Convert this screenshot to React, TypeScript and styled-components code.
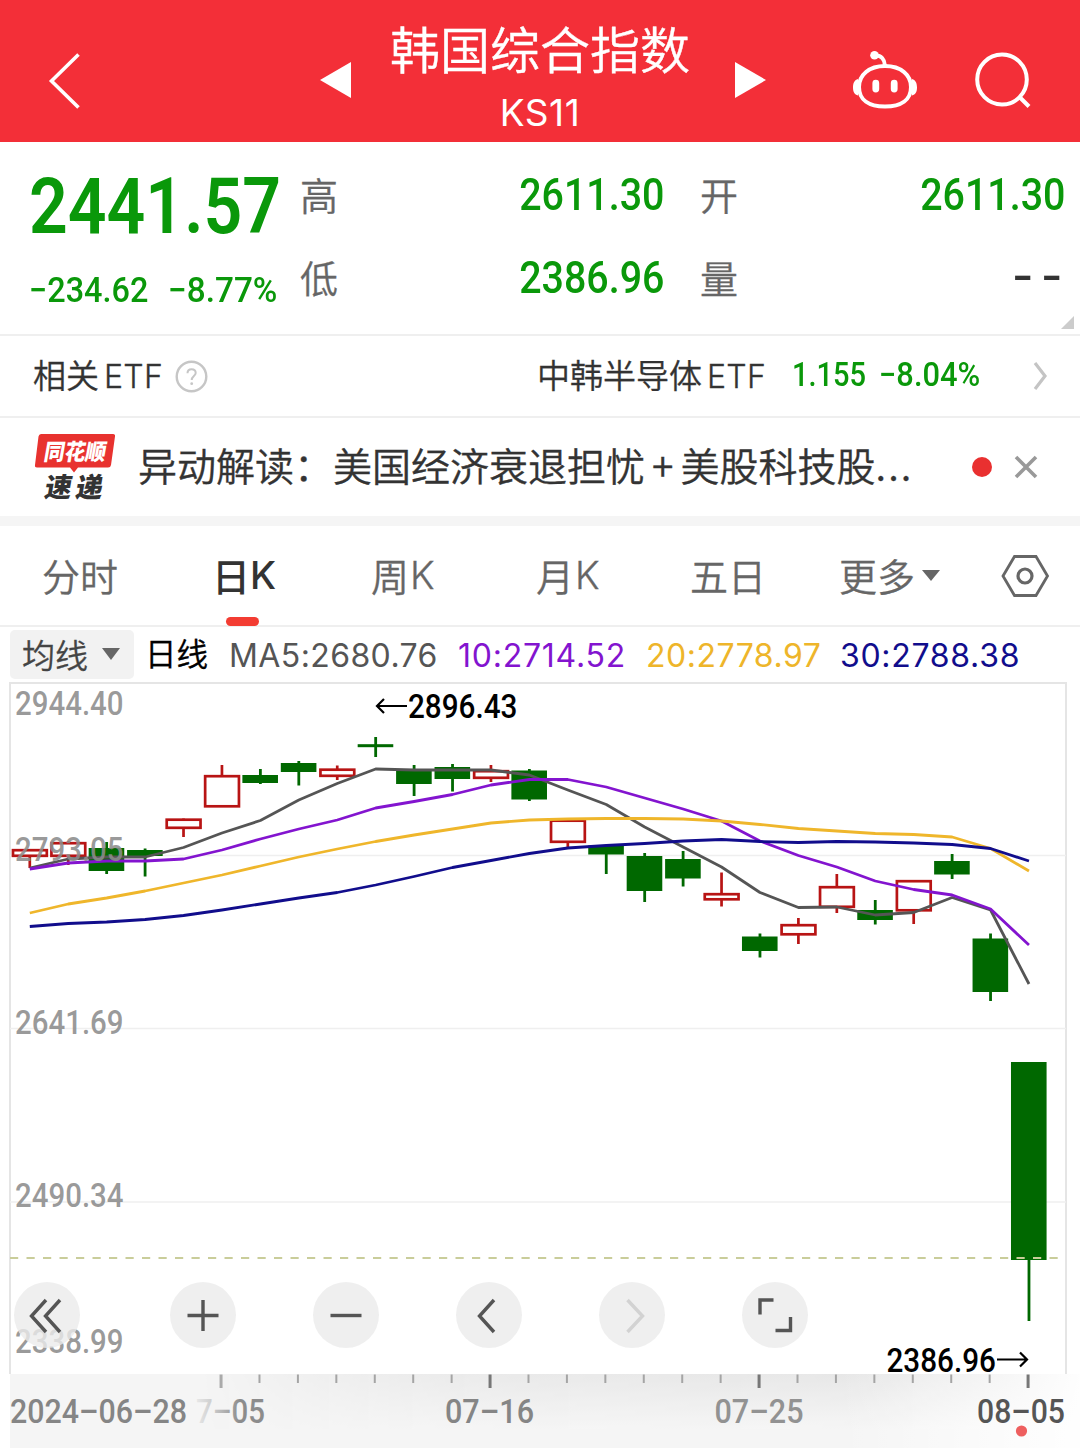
import React from 'react';
import styled, { createGlobalStyle } from 'styled-components';

const GlobalStyle = createGlobalStyle`
  * { box-sizing: border-box; }
  body { margin: 0; background: #fff; }
`;

const CJK = '"Noto Sans CJK SC", "Noto Sans", sans-serif';
const DIGITS = 'Roboto, "Noto Sans CJK SC", sans-serif';
const GREEN = '#0a980a';

const Screen = styled.div`
  width: 1080px;
  height: 1448px;
  overflow: hidden;
  background: #fff;
  color: #333;
  font-family: ${CJK};
  display: flex;
  flex-direction: column;
`;

/* ---------- header ---------- */

const Header = styled.header`
  height: 142px;
  flex: none;
  background: #f32f38;
  color: #fff;
  display: grid;
  grid-template-columns: 320px 32px 376px 38px 314px;
  align-items: center;
  svg { display: block; }
`;

const BackCell = styled.div`
  padding: 19px 0 0 48px;
`;

const ArrowCell = styled.div<{ $right?: boolean }>`
  padding-top: 18px;
  padding-left: ${(p) => (p.$right ? '7px' : '0')};
`;

const TitleCell = styled.div`
  align-self: start;
  display: flex;
  flex-direction: column;
  align-items: center;
`;

const Title = styled.h1`
  margin: 15px 0 0;
  font-size: 50px;
  line-height: 64px;
  font-weight: 350;
  -webkit-text-stroke: 0.4px currentColor;
  white-space: nowrap;
`;

const Code = styled.div`
  margin-top: 9px;
  font-family: Inter, sans-serif;
  font-size: 37px;
  line-height: 50px;
  font-weight: 400;
  letter-spacing: 0.6px;
`;

const HeaderIcons = styled.div`
  display: flex;
  gap: 54px;
  padding: 20px 0 0 84px;
`;

/* ---------- numbers ---------- */

const Num = styled.span<{ $size: number; $sx?: number; $right?: boolean; $weight?: number }>`
  display: inline-block;
  font-family: ${DIGITS};
  font-size: ${(p) => p.$size}px;
  font-weight: ${(p) => p.$weight ?? 500};
  color: ${GREEN};
  white-space: pre;
  transform: scaleX(${(p) => p.$sx ?? 1});
  transform-origin: ${(p) => (p.$right ? 'right' : 'left')} center;
`;

const Quote = styled.section`
  height: 194px;
  flex: none;
  display: grid;
  grid-template-columns: 271px 364px 364px;
  column-gap: 0;
  padding-left: 29px;
  border-bottom: 2px solid #efefef;
  position: relative;
`;

const PriceCol = styled.div`
  padding-top: 35px;
`;

const Price = styled.div`
  height: 60px;
  line-height: 60px;
`;

const Changes = styled.div`
  margin-top: 34px;
  height: 40px;
  line-height: 40px;
  display: grid;
  grid-template-columns: 139px 120px;
`;

const StatCol = styled.div<{ $shift?: boolean }>`
  padding-top: 27px;
  margin-left: ${(p) => (p.$shift ? '36px' : '0')};
  margin-right: ${(p) => (p.$shift ? '-37px' : '0')};
  display: flex;
  flex-direction: column;
  gap: 33px;
`;

const Stat = styled.div`
  display: flex;
  justify-content: space-between;
  height: 50px;
  line-height: 50px;
  ${Num} { line-height: 54px; }
`;

const StatLabel = styled.span`
  font-size: 38px;
  font-weight: 350;
  -webkit-text-stroke: 0.3px currentColor;
  color: #666;
`;

const Dashes = styled.span`
  display: inline-block;
  font-family: Roboto, sans-serif;
  font-weight: 700;
  font-size: 38px;
  letter-spacing: 5px;
  color: #333;
  margin-right: -5px;
  transform: scaleX(1.45);
  transform-origin: right center;
`;

const Corner = styled.i`
  position: absolute;
  right: 6px;
  bottom: 5px;
  border-left: 13px solid transparent;
  border-bottom: 13px solid #ccc;
`;

/* ---------- ETF row ---------- */

const EtfRow = styled.section`
  height: 82px;
  flex: none;
  display: flex;
  align-items: center;
  padding-left: 33px;
  border-bottom: 2px solid #efefef;
  font-size: 33px;
  line-height: 50px;
  font-weight: 350;
  white-space: nowrap;
  svg { display: block; }
`;

const EtfLabel = styled.span<{ $w: number }>`
  width: ${(p) => p.$w}px;
  margin-top: -2px;
  -webkit-text-stroke: 0.3px currentColor;
  span { margin-left: 5px; font-family: Inter, sans-serif; font-size: 32px; letter-spacing: 0.3px; }
`;

const EtfQuote = styled.div`
  margin-left: 329px;
  display: grid;
  grid-template-columns: 255px 87px 154px 20px;
  align-items: center;
  ${Num} { margin-top: -2px; }
`;

/* ---------- news row ---------- */

const NewsRow = styled.section`
  height: 98px;
  flex: none;
  display: grid;
  grid-template-columns: 105px 834px 42px 40px;
  align-items: center;
  padding-left: 33px;
  svg { display: block; overflow: visible; }
`;

const NewsText = styled.span`
  font-size: 39px;
  line-height: 56px;
  font-weight: 350;
  -webkit-text-stroke: 0.35px currentColor;
  white-space: nowrap;
  margin-top: -6px;
`;

const Plus = styled.span`
  margin: 0 7px;
`;

const Dots = styled.span`
  letter-spacing: 2.2px;
`;

const NewsDot = styled.i`
  width: 20px;
  height: 20px;
  border-radius: 50%;
  background: #e93030;
`;

const Band = styled.div`
  height: 10px;
  flex: none;
  background: #f5f5f5;
`;

/* ---------- tabs ---------- */

const Tabs = styled.nav`
  height: 101px;
  flex: none;
  display: grid;
  grid-template-columns: 172px 157px 165px 154px 149px 162px 60px;
  padding-left: 42px;
  border-bottom: 2px solid #efefef;
  svg { display: block; }
`;

const Tab = styled.div<{ $active?: boolean }>`
  display: flex;
  flex-direction: column;
  align-items: flex-start;
  padding-top: 21px;
  font-size: 38px;
  line-height: 56px;
  font-weight: ${(p) => (p.$active ? 500 : 350)};
  -webkit-text-stroke: ${(p) => (p.$active ? 0 : 0.3)}px currentColor;
  color: ${(p) => (p.$active ? '#333' : '#666')};
  b {
    font-family: Inter, sans-serif;
    font-weight: ${(p) => (p.$active ? 500 : 350)};
    font-size: 38px;
  }
`;

const TabText = styled.span<{ $pull?: boolean }>`
  display: flex;
  align-items: center;
  gap: ${(p) => (p.$pull ? 0 : 1)}px;
  margin-left: ${(p) => (p.$pull ? -2 : 0)}px;
  height: 56px;
  white-space: nowrap;
`;

const Underline = styled.i`
  width: 33px;
  height: 9px;
  border-radius: 5px;
  background: #f33c32;
  margin: 14px 0 0 12px;
`;

const Caret = styled.i<{ $h: number; $ml: number }>`
  border: 9px solid transparent;
  border-top: ${(p) => p.$h}px solid #666;
  border-bottom: 0;
  margin-left: ${(p) => p.$ml}px;
`;

const SettingsCell = styled.div`
  padding-top: 29px;
`;

/* ---------- legend ---------- */

const Legend = styled.div`
  height: 55px;
  flex: none;
  display: grid;
  grid-template-columns: 124px 84px 229px 188px 194px 200px;
  column-gap: 0;
  padding: 3px 0 0 10px;
  white-space: nowrap;
`;

const MaButton = styled.button`
  width: 124px;
  height: 49px;
  padding: 0 0 2px 12px;
  border: 0;
  border-radius: 5px;
  background: #f2f2f2;
  color: #444;
  font-family: ${CJK};
  font-size: 33px;
  font-weight: 350;
  -webkit-text-stroke: 0.3px currentColor;
  line-height: 46px;
  display: flex;
  align-items: center;
`;

const Period = styled.span`
  padding-left: 11px;
  font-size: 31.5px;
  line-height: 45px;
  font-weight: 350;
  -webkit-text-stroke: 0.4px currentColor;
  color: #000;
`;

const Ma = styled.span<{ $color: string; $ls: number }>`
  padding-left: 11px;
  font-family: Inter, sans-serif;
  font-size: 32px;
  line-height: 51px;
  color: ${(p) => p.$color};
  letter-spacing: ${(p) => p.$ls}px;
`;

/* ---------- chart ---------- */

const ChartArea = styled.section`
  position: relative;
  height: 766px;
  flex: none;
  svg { display: block; }
`;

const Controls = styled.div`
  position: absolute;
  left: 14px;
  top: 600px;
  display: flex;
  gap: 77px;
`;

const RoundButton = styled.button<{ $first?: boolean }>`
  width: 66px;
  height: 66px;
  padding: 0;
  border: 0;
  border-radius: 50%;
  background: rgba(235, 235, 235, 0.8);
  margin-right: ${(p) => (p.$first ? '13px' : '0')};
`;

type Candle = { up?: boolean; top: number; bottom: number; high: number; low: number };

const c = (top: number, bottom: number, high: number, low: number, up = false): Candle => ({ top, bottom, high, low, up });

const candles: Candle[] = [
  c(849, 857, 849, 868, true),
  c(842, 857, 841, 865, true),
  c(848, 871, 842, 874),
  c(850, 856, 848.5, 876.5),
  c(818.5, 829, 818.5, 837, true),
  c(775, 807.5, 765, 807, true),
  c(775, 783, 769, 784),
  c(763, 772, 761, 785.5),
  c(768.5, 777, 765.5, 780, true),
  c(744.2, 747.2, 737, 757),
  c(769, 784, 765, 796),
  c(767, 779, 764, 791.5),
  c(770, 779, 765, 782, true),
  c(770.5, 799.5, 769, 801),
  c(819.5, 843, 820, 848, true),
  c(845.5, 854.5, 845.5, 874),
  c(856, 891, 853, 902),
  c(859, 878.5, 851, 886.5),
  c(893, 900.5, 872.5, 906.5, true),
  c(936.5, 951, 933.5, 957.5),
  c(924, 935.5, 918, 944, true),
  c(886, 908, 874, 913, true),
  c(910, 920, 900, 924.5),
  c(880, 911.5, 880, 924, true),
  c(861, 874.5, 854, 879),
  c(938.5, 992, 933.5, 1001),
  c(1062, 1260, 1062, 1321),
];

const averages = [
  { color: '#555', ys: [868, 859, 857, 857, 847.5, 833, 820.5, 800, 783.5, 769, 770, 770, 770, 775, 790, 804.5, 827, 847, 867, 892.5, 907.5, 907, 915, 912.5, 897.5, 910, 984] },
  { color: '#8314cf', ys: [869, 863, 861, 861, 859, 850, 839, 829, 820, 808, 801.5, 794.5, 785, 779.5, 779.5, 787, 798, 809, 821, 841, 855.5, 867, 881, 889.5, 895, 909, 945] },
  { color: '#efb62b', ys: [913, 904, 898, 891, 883, 875, 866, 857, 849, 841.5, 835, 829, 823, 820, 819, 818.5, 818.5, 819, 821, 824.5, 828.5, 831, 833.5, 834.5, 837, 848.5, 871] },
  { color: '#110d8c', ys: [926.5, 923.5, 922, 919.5, 915.5, 910, 904, 898, 892.5, 885, 876.5, 867.5, 860.5, 853.5, 848, 845.5, 843.5, 841, 839.5, 841.5, 842.5, 841.5, 842, 843, 844.5, 848.5, 861] },
];

const cx = (i: number) => 29.8 + i * 38.43;

const priceLabels: [string, number][] = [
  ['2944.40', 714.5],
  ['2793.05', 860.5],
  ['2641.69', 1034],
  ['2490.34', 1207],
  ['2338.99', 1353],
];

const dateLabels = [
  { text: '2024–06–28', x: 10, w: 177, fill: '#858585' },
  { text: '7–05', x: 196, w: 69, fill: 'url(#dateFade)' },
  { text: '07–16', x: 445, w: 89, fill: '#858585' },
  { text: '07–25', x: 714.5, w: 89, fill: '#929292' },
  { text: '08–05', x: 977, w: 88, fill: '#555' },
];

const Chart = () => (
  <svg width="1080" height="766" viewBox="0 682 1080 766" fontFamily={DIGITS} fontWeight={500} fontSize={32.5}>
    <defs>
      <linearGradient id="dateFade" gradientUnits="userSpaceOnUse" x1="196" y1="0" x2="240" y2="0">
        <stop offset="0" stopColor="#e8e8e8" />
        <stop offset="0.35" stopColor="#cfcfcf" />
        <stop offset="1" stopColor="#8c8c8c" />
      </linearGradient>
      <linearGradient id="axisDown" x1="0" y1="0" x2="0" y2="1">
        <stop offset="0" stopColor="#e5e5e5" />
        <stop offset="1" stopColor="#f5f5f5" />
      </linearGradient>
      <linearGradient id="axisMask" x1="0" y1="0" x2="1" y2="0">
        <stop offset="0" stopColor="#000" />
        <stop offset="0.35" stopColor="#fff" stopOpacity="0.7" />
        <stop offset="1" stopColor="#fff" />
      </linearGradient>
      <linearGradient id="axisRight" x1="0" y1="0" x2="1" y2="0">
        <stop offset="0" stopColor="#fff" stopOpacity="0" />
        <stop offset="1" stopColor="#fff" stopOpacity="0.95" />
      </linearGradient>
      <mask id="shadeMask"><rect x="200" y="1374" width="880" height="74" fill="url(#axisMask)" /></mask>
    </defs>

    <rect x="10" y="1374" width="1070" height="74" fill="#f5f5f5" />
    <rect x="200" y="1374" width="880" height="55" fill="url(#axisDown)" mask="url(#shadeMask)" />
    <rect x="840" y="1374" width="240" height="74" fill="url(#axisRight)" />

    <path d="M10 1374V683H1066V1374" fill="none" stroke="#e5e5e5" strokeWidth="2" />
    {[855.5, 1028.5, 1202].map((y) => (
      <path key={y} d={`M10 ${y}H1066`} stroke="#efefef" strokeWidth="1.6" />
    ))}

    {candles.map((k, i) =>
      k.up ? (
        <g key={i} stroke="#b81414" strokeWidth="2.7" fill="none">
          <path d={`M${cx(i)} ${k.high}V${k.top + 1}M${cx(i)} ${k.bottom - 1}V${k.low}`} />
          <rect x={cx(i) - 16.8} y={k.top + 1.2} width="33.8" height={k.bottom - k.top - 2.4} />
        </g>
      ) : (
        <g key={i} fill="#006800">
          <rect x={cx(i) - 1.4} y={k.high} width="2.8" height={k.low - k.high} />
          <rect x={cx(i) - 18} y={k.top} width="35.6" height={k.bottom - k.top} />
        </g>
      ),
    )}

    {averages.map((a) => (
      <polyline
        key={a.color}
        points={a.ys.map((y, i) => `${cx(i)},${y}`).join(' ')}
        fill="none"
        stroke={a.color}
        strokeWidth="2.8"
        strokeLinejoin="round"
      />
    ))}

    <path d="M10 1258H1066" stroke="#c9cd9a" strokeWidth="1.8" strokeDasharray="8.2 8.3" />

    {priceLabels.map(([t, y]) => (
      <text key={t} x="15" y={y} fill="#8c8c8c" fillOpacity="0.88" textLength="108.5" lengthAdjust="spacingAndGlyphs">
        {t}
      </text>
    ))}

    <g fill="#000">
      <text x="408" y="717.5" textLength="109.5" lengthAdjust="spacingAndGlyphs">2896.43</text>
      <text x="886.5" y="1371.5" textLength="109.5" lengthAdjust="spacingAndGlyphs">2386.96</text>
    </g>
    <path
      d="M407 706H377.500M384 699L377 706L384 713M997 1359.500H1026.500M1020 1352.500L1027 1359.500L1020 1366.500"
      fill="none"
      stroke="#000"
      strokeWidth="2.200"
    />

    {Array.from({ length: 22 }, (_, n) => n + 5).map((i) => {
      const major = i === 5 || i === 12 || i === 19 || i === 26;
      const x = cx(i) - 0.9;
      return <path key={i} d={`M${x} 1374.500V${major ? 1388 : 1383}`} stroke={i === 5 ? '#aaa' : major ? '#777' : '#a5a5a5'} strokeWidth={major ? 3 : 2} />;
    })}

    {dateLabels.map((d) => (
      <text key={d.text} x={d.x} y="1423" fill={d.fill} textLength={d.w} lengthAdjust="spacingAndGlyphs">
        {d.text}
      </text>
    ))}
    <circle cx="1021.5" cy="1431" r="5.6" fill="#ee5f5f" />
  </svg>
);

const icons: { d: string; color?: string }[] = [
  { d: 'M32 18L17.5 34L32 50M46 18L31.5 34L46 50' },
  { d: 'M33 18V49M17.5 33.5H48.5' },
  { d: 'M17.5 33.5H48.5' },
  { d: 'M38 18L23.5 34L38 50' },
  { d: 'M28.5 18L43.5 34L28.5 50', color: '#d2d2d2' },
  { d: 'M31.5 18H18V32.5M33.5 48.5H48.5V35' },
];

export default function App() {
  return (
    <Screen>
      <GlobalStyle />
      <Header>
        <BackCell>
          <svg width="34" height="58" viewBox="0 0 34 58" fill="none" stroke="#fff" strokeWidth="3.6">
            <path d="M30.5 2.5L3.5 29L30.5 55.500" />
          </svg>
        </BackCell>
        <ArrowCell>
          <svg width="32" height="36" viewBox="0 0 32 36"><path d="M0 18L31 0V36Z" fill="#fff" /></svg>
        </ArrowCell>
        <TitleCell>
          <Title>韩国综合指数</Title>
          <Code>KS11</Code>
        </TitleCell>
        <ArrowCell $right>
          <svg width="31" height="36" viewBox="0 0 31 36"><path d="M0 0L31 18L0 36Z" fill="#fff" /></svg>
        </ArrowCell>
        <HeaderIcons>
          <svg width="70" height="62" viewBox="850 50 70 62" fill="none" stroke="#fff" strokeWidth="4">
            <circle cx="874.5" cy="55.300" r="4.300" fill="#fff" stroke="none" />
            <path d="M876 55.500C881 55.500 884.500 59 884.800 65" />
            <path d="M885 66C901 66 911 75 911 87C911 100 901 106.500 885 106.500C869 106.500 859 100 859 87C859 75 869 66 885 66Z" />
            <path d="M858 79C854.500 80 853 83 853 87.500C853 92 854.500 94.500 858 95.500ZM912 79C915.500 80 917 83 917 87.500C917 92 915.500 94.500 912 95.500Z" fill="#fff" stroke="none" />
            <path d="M875.800 83.200V89M894.200 83.200V89" strokeWidth="6.800" strokeLinecap="round" />
          </svg>
          <svg width="60" height="62" viewBox="974 50 60 62" fill="none" stroke="#fff" strokeWidth="4">
            <ellipse cx="1002" cy="79.500" rx="24.800" ry="25" />
            <path d="M1019 96.500L1029 106.500" />
          </svg>
        </HeaderIcons>
      </Header>

      <Quote>
        <PriceCol>
          <Price><Num $size={77.5} $sx={0.876} $weight={600}>2441.57</Num></Price>
          <Changes>
            <Num $size={35} $sx={0.926}>−234.62</Num>
            <Num $size={35} $sx={0.952}>−8.77%</Num>
          </Changes>
        </PriceCol>
        <StatCol>
          <Stat><StatLabel>高</StatLabel><Num $size={43.5} $sx={0.905} $right>2611.30</Num></Stat>
          <Stat><StatLabel>低</StatLabel><Num $size={43.5} $sx={0.905} $right>2386.96</Num></Stat>
        </StatCol>
        <StatCol $shift>
          <Stat><StatLabel>开</StatLabel><Num $size={43.5} $sx={0.905} $right>2611.30</Num></Stat>
          <Stat><StatLabel>量</StatLabel><Dashes>--</Dashes></Stat>
        </StatCol>
        <Corner />
      </Quote>

      <EtfRow>
        <EtfLabel $w={142}>相关<span>ETF</span></EtfLabel>
        <svg width="33" height="33" viewBox="0 0 33 33" fill="none" stroke="#c6c6c6">
          <circle cx="16.500" cy="16.500" r="14.800" strokeWidth="2.400" />
          <path d="M12.500 13.300C12.500 10.800 14.200 9.300 16.600 9.300C19 9.300 20.700 10.800 20.700 13C20.700 16 16.700 16.200 16.700 20" strokeWidth="2" />
          <circle cx="16.700" cy="23.700" r="1.400" fill="#c6c6c6" stroke="none" />
        </svg>
        <EtfQuote>
          <EtfLabel $w={240}>中韩半导体<span>ETF</span></EtfLabel>
          <Num $size={33} $sx={0.88}>1.155</Num>
          <Num $size={33} $sx={0.935}>−8.04%</Num>
          <svg width="16" height="30" viewBox="0 0 16 30" fill="none" stroke="#c4c4c4" strokeWidth="3.200">
            <path d="M2 2L12 15L2 28" />
          </svg>
        </EtfQuote>
      </EtfRow>

      <NewsRow>
        <svg width="84" height="70" viewBox="32 432 84 70" fontFamily={CJK} fontWeight={900}>
          <path d="M40 434H112Q114.500 434 114 436.500L110 465Q109.600 467.500 107 467.500H77L73 472.500L69 467.500H36Q33.600 467.500 34 465L37.500 436.500Q38 434 40 434Z" fill="#e8322f" />
          <text transform="translate(42 459.500) skewX(-10)" fontSize="22.500" fill="#fff" textLength="62" lengthAdjust="spacingAndGlyphs">同花顺</text>
          <text transform="translate(42.500 497) skewX(-10)" x="0 31" fontSize="27" fill="#333">速递</text>
        </svg>
        <NewsText>异动解读：美国经济衰退担忧<Plus>+</Plus>美股科技股<Dots>...</Dots></NewsText>
        <NewsDot />
        <svg width="24" height="24" viewBox="0 0 24 24" stroke="#999" strokeWidth="3.600">
          <path d="M2 2L22 22M22 2L2 22" />
        </svg>
      </NewsRow>
      <Band />

      <Tabs>
        <Tab><TabText>分时</TabText></Tab>
        <Tab $active>
          <TabText $pull>日<b>K</b></TabText>
          <Underline />
        </Tab>
        <Tab><TabText>周<b>K</b></TabText></Tab>
        <Tab><TabText>月<b>K</b></TabText></Tab>
        <Tab><TabText>五日</TabText></Tab>
        <Tab><TabText>更多<Caret $h={11} $ml={6} /></TabText></Tab>
        <SettingsCell>
          <svg width="48" height="42" viewBox="0 0 48 42" fill="none" stroke="#666" strokeWidth="2.800">
            <path d="M2 21L13.500 1.500H35L46.500 21L35 40.500H13.500Z" />
            <circle cx="24" cy="21" r="7" strokeWidth="3.200" />
          </svg>
        </SettingsCell>
      </Tabs>

      <Legend>
        <MaButton>均线<Caret $h={12} $ml={14} /></MaButton>
        <Period>日线</Period>
        <Ma $color="#555" $ls={0.4}>MA5:2680.76</Ma>
        <Ma $color="#8314cf" $ls={0.75}>10:2714.52</Ma>
        <Ma $color="#eeb52a" $ls={0.5}>20:2778.97</Ma>
        <Ma $color="#110d8c" $ls={0.7}>30:2788.38</Ma>
      </Legend>

      <ChartArea>
        <Chart />
        <Controls>
          {icons.map((icon, i) => (
            <RoundButton key={i} $first={i === 0}>
              <svg width="66" height="66" viewBox="0 0 66 66" fill="none" stroke={icon.color ?? '#555'} strokeWidth="3.400">
                <path d={icon.d} />
              </svg>
            </RoundButton>
          ))}
        </Controls>
      </ChartArea>
    </Screen>
  );
}
